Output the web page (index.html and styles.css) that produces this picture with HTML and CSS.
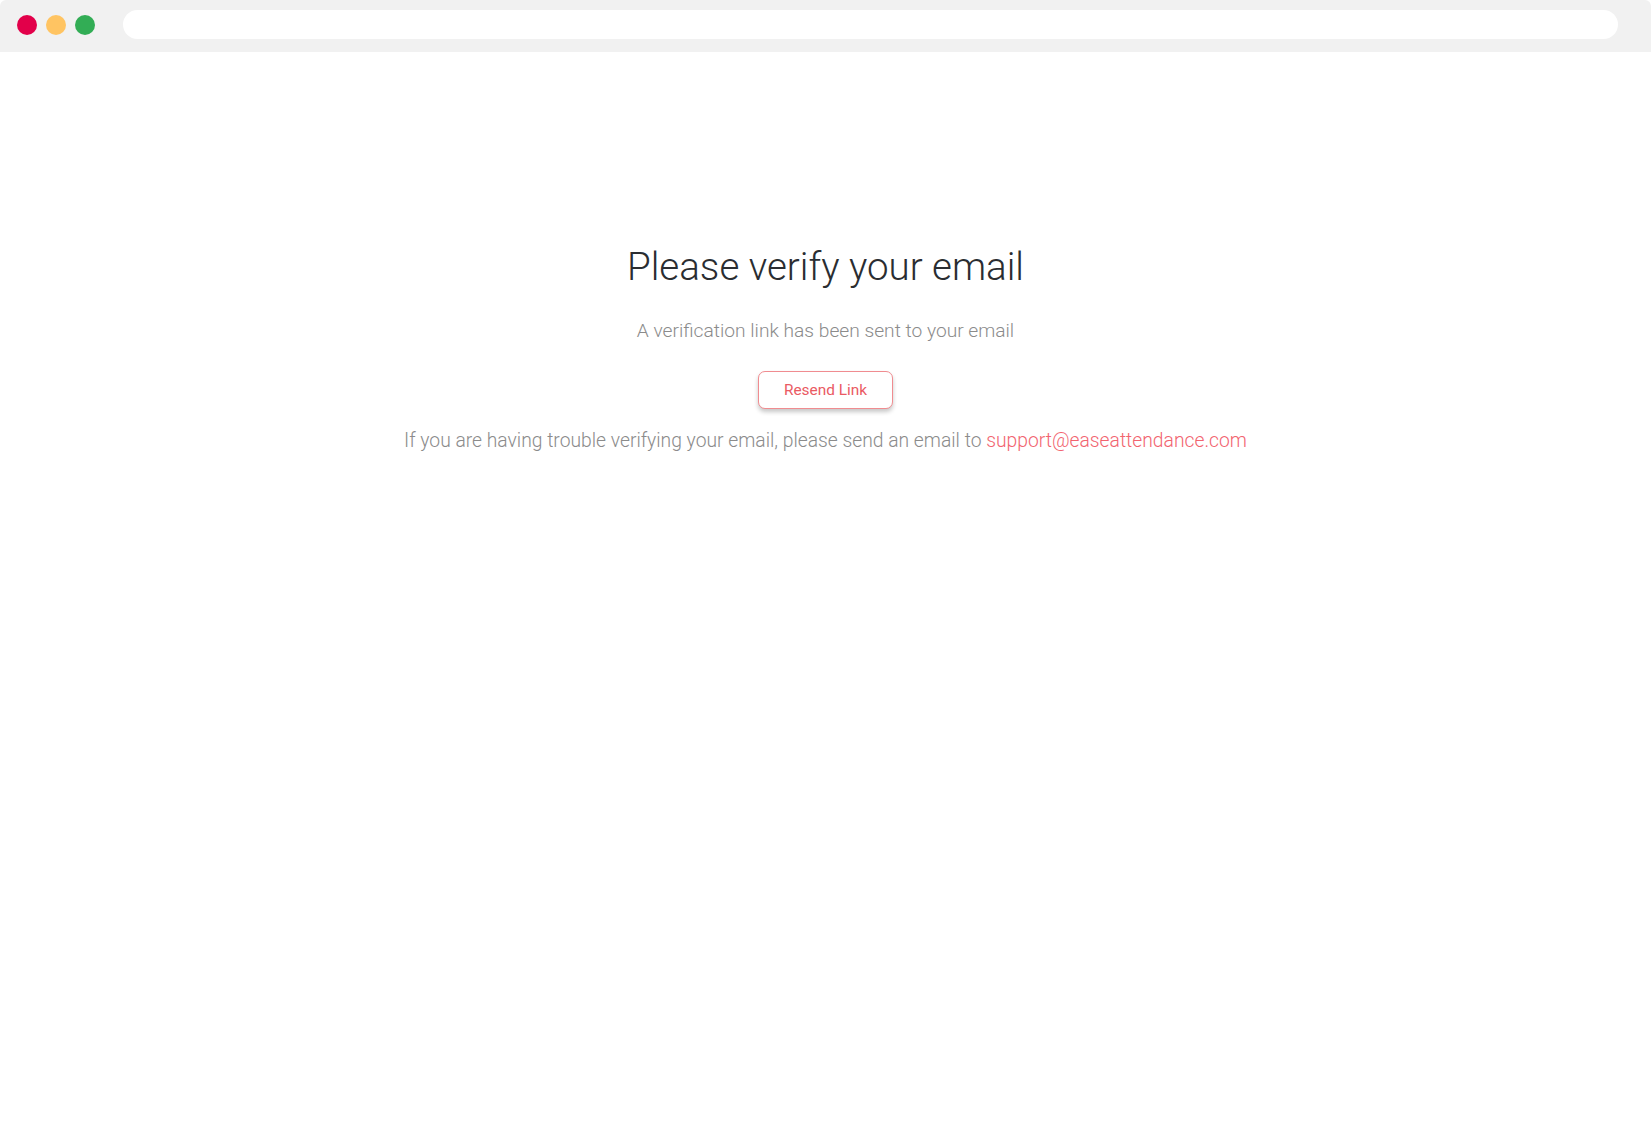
FILE: index.html
```html
<!DOCTYPE html>
<html lang="en">
<head>
<meta charset="utf-8">
<title>Verify email</title>
<link rel="stylesheet" href="styles.css">
</head>
<body>
<div class="window">
  <header class="chrome">
    <div class="dots">
      <span class="dot dot-red"></span>
      <span class="dot dot-yellow"></span>
      <span class="dot dot-green"></span>
    </div>
    <div class="urlbar"></div>
  </header>
  <main class="content">
    <h1 class="title">Please verify your email</h1>
    <p class="subtitle">A verification link has been sent to your email</p>
    <button class="resend" type="button">Resend Link</button>
    <p class="help">If you are having trouble verifying your email, please send an email to <a class="mail" href="#">support@easeattendance.com</a></p>
  </main>
</div>
</body>
</html>
```
FILE: styles.css
```css
html, body {
  margin: 0;
  padding: 0;
  background: #ffffff;
}
body {
  font-family: Roboto, "Liberation Sans", Arial, sans-serif;
  width: 1651px;
  height: 1126px;
  overflow: hidden;
}
.window {
  display: flex;
  flex-direction: column;
  height: 100%;
}
.chrome {
  height: 52px;
  background: #f1f1f1;
  border-radius: 6px 6px 0 0;
  display: flex;
  align-items: flex-start;
  padding: 0 33px 0 17px;
  box-sizing: border-box;
}
.dots {
  display: flex;
  gap: 9px;
  margin-top: 15px;
}
.dot {
  width: 20px;
  height: 20px;
  border-radius: 50%;
  display: block;
}
.dot-red { background: #e2004a; }
.dot-yellow { background: #ffc462; }
.dot-green { background: #32ad55; }
.urlbar {
  flex: 1;
  height: 29px;
  margin-top: 10px;
  margin-left: 28px;
  background: #ffffff;
  border-radius: 15px;
}
.content {
  display: flex;
  flex-direction: column;
  align-items: center;
  padding-top: 190px;
}
.title {
  margin: 0;
  font-size: 38.5px;
  font-weight: 300;
  line-height: 50px;
  color: #2a2d31;
}
.subtitle {
  margin: 25px 0 0;
  font-size: 19.2px;
  font-weight: 300;
  line-height: 27px;
  color: #8b8b8b;
}
.resend {
  margin-top: 27px;
  font-family: Roboto, "Liberation Sans", Arial, sans-serif;
  font-size: 15.4px;
  font-weight: 400;
  color: #ea5a63;
  background: #ffffff;
  border: 1.5px solid #f08c90;
  border-radius: 7px;
  height: 38px;
  padding: 0 25px;
  box-shadow: 0 3px 4px rgba(0, 0, 0, 0.22);
  cursor: pointer;
}
.help {
  margin: 18px 0 0;
  font-size: 19.3px;
  font-weight: 300;
  line-height: 27px;
  color: #8b8b8b;
}
.mail {
  color: #f2646f;
  text-decoration: none;
}
```
